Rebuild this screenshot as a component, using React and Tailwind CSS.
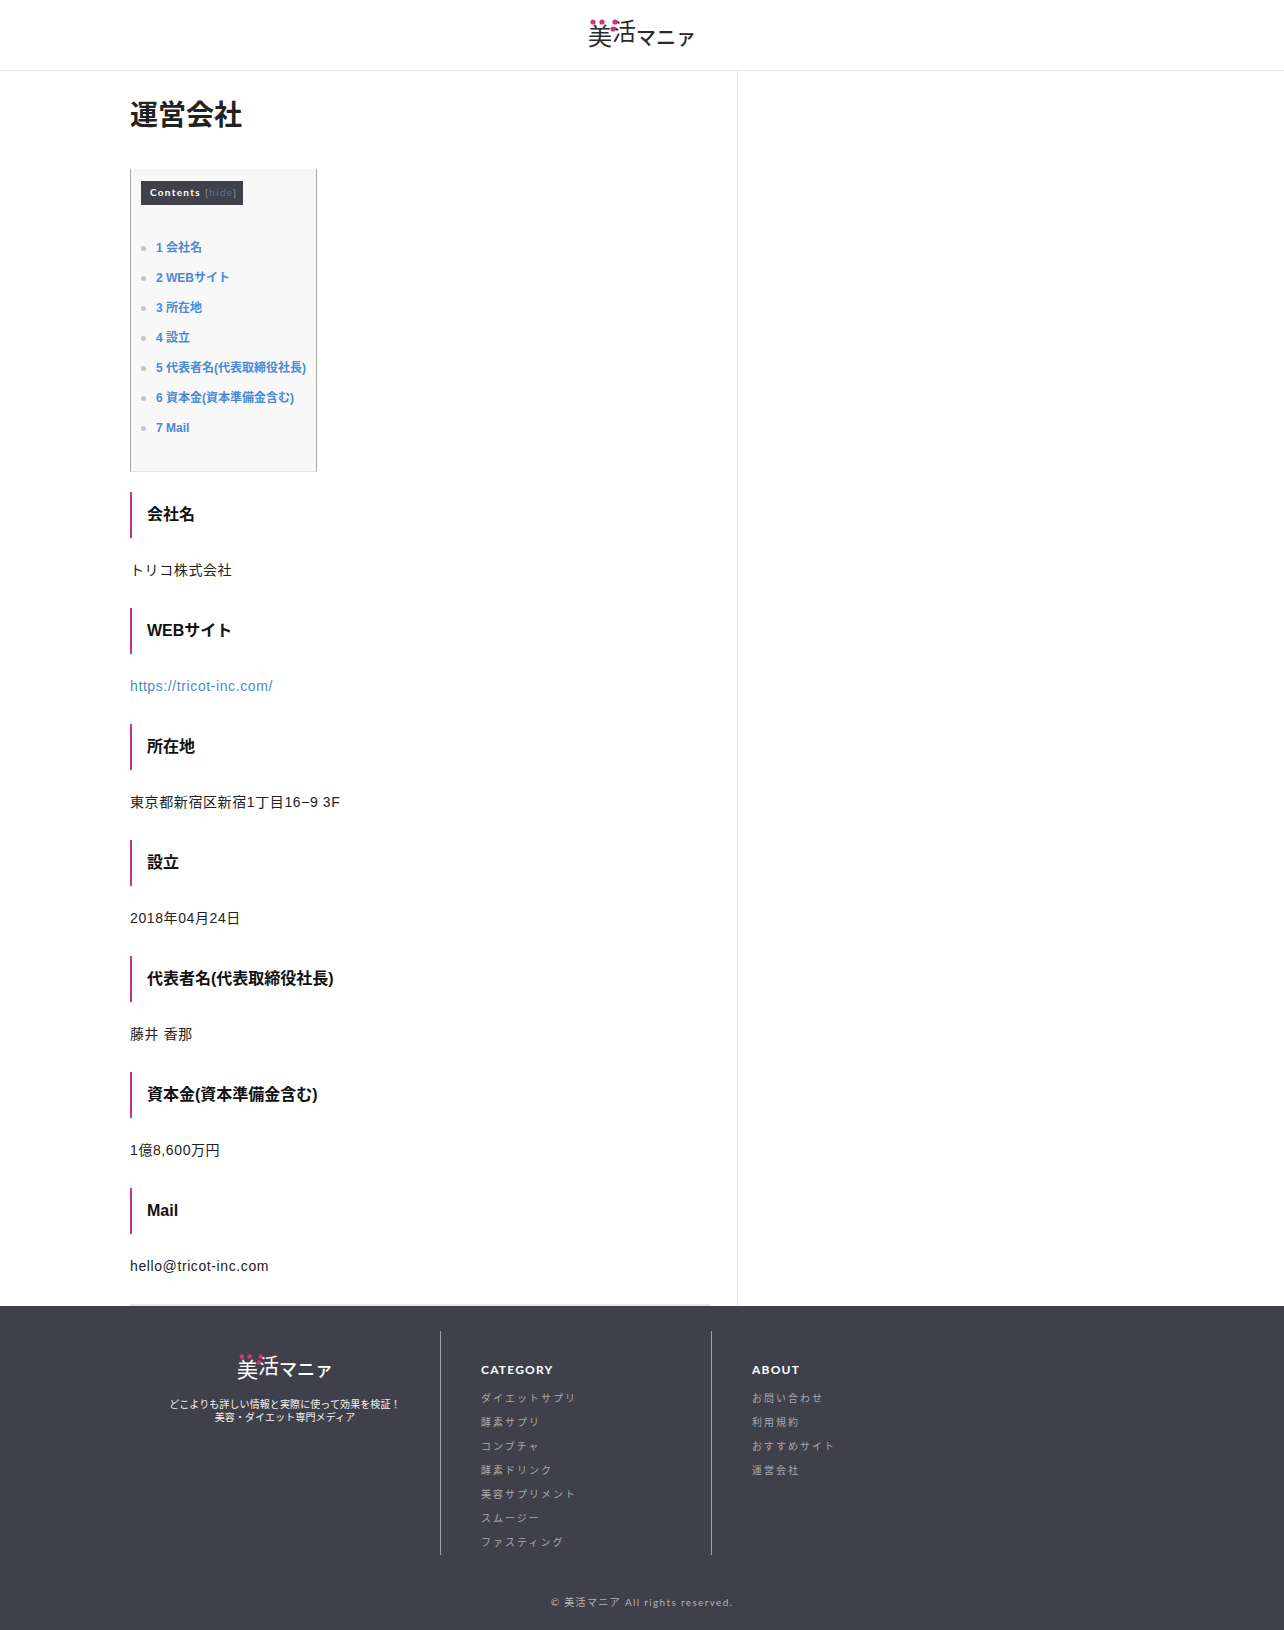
const sans = { fontFamily: '"Liberation Sans", "Noto Sans CJK JP", sans-serif' }

const toc = ['1 会社名', '2 WEBサイト', '3 所在地', '4 設立', '5 代表者名(代表取締役社長)', '6 資本金(資本準備金含む)', '7 Mail']

const sections = [
  { title: '会社名', body: 'トリコ株式会社' },
  { title: 'WEBサイト', body: 'https://tricot-inc.com/', link: true },
  { title: '所在地', body: '東京都新宿区新宿1丁目16−9 3F' },
  { title: '設立', body: '2018年04月24日' },
  { title: '代表者名(代表取締役社長)', body: '藤井 香那' },
  { title: '資本金(資本準備金含む)', body: '1億8,600万円' },
  { title: 'Mail', body: 'hello@tricot-inc.com' },
]

const categories = ['ダイエットサプリ', '酵素サプリ', 'コンブチャ', '酵素ドリンク', '美容サプリメント', 'スムージー', 'ファスティング']
const about = ['お問い合わせ', '利用規約', 'おすすめサイト', '運営会社']

function Dots({ width, height }) {
  return (
    <svg className="absolute left-0 top-0" width={width} height={height} viewBox="0 0 50 14">
      <circle cx="5" cy="3" r="2.6" fill="#d2357d" />
      <circle cx="14" cy="3" r="2.6" fill="#d2357d" />
      <circle cx="27" cy="3" r="2.6" fill="#d2357d" />
      <circle cx="25" cy="10" r="2.6" fill="#d2357d" />
    </svg>
  )
}

function HeaderLogo() {
  return (
    <div className="relative flex items-end h-[32px] text-[#2a2a2e]">
      <span className="text-[24px] leading-[30px] translate-y-[1px]">美</span>
      <span className="text-[24px] leading-[30px] -translate-y-[4px]">活</span>
      <span className="text-[20px] leading-[24px] font-medium -translate-y-[1px]">マニァ</span>
      <Dots width={50} height={14} />
    </div>
  )
}

function FooterLogo() {
  return (
    <div className="relative flex items-end h-[28px] text-white">
      <span className="text-[21px] leading-[26px] translate-y-[1px]">美</span>
      <span className="text-[21px] leading-[26px] -translate-y-[3px]">活</span>
      <span className="text-[18px] leading-[22px] font-medium -translate-y-[1px]">マニァ</span>
      <Dots width={44} height={12} />
    </div>
  )
}

function FooterList({ title, items }) {
  return (
    <div>
      <p className="text-[12px] leading-[16px] font-bold tracking-[1.2px] text-white" style={{ fontFamily: 'Lato, sans-serif' }}>{title}</p>
      <ul className="mt-[9px]">
        {items.map((item) => (
          <li key={item} className="h-[24px] leading-[24px] text-[10px] tracking-[2px] text-[#a9a9ae]">{item}</li>
        ))}
      </ul>
    </div>
  )
}

export default function App() {
  return (
    <div className="min-h-[1630px] bg-white flex flex-col" style={sans}>
      {/* Header */}
      <header className="h-[71px] border-b border-[#e6e6e6] flex items-center justify-center">
        <HeaderLogo />
      </header>

      {/* Main */}
      <div className="flex h-[1235px]">
        <main className="w-[738px] shrink-0 border-r border-[#e4e4e4] pl-[130px] pr-[27px] flex flex-col">
          <h1 className="mt-[26px] text-[28px] leading-[38px] font-bold text-[#222222]">運営会社</h1>

          {/* TOC */}
          <div className="mt-[34px] w-[187px] h-[303px] bg-[#f8f8f8] border-x border-b border-x-[#a8a8a8] border-b-[#e4e4e4] pl-[10px] pt-[12px]">
            <div className="flex items-center h-[24px] w-[102px] pl-[9px] pb-[2px] bg-[#41414b] text-[10px] tracking-[1.3px]" style={{ fontFamily: 'Lato, sans-serif' }}>
              <span className="font-bold text-white">Contents</span>
              <span className="ml-[4px] text-[#9a9aa4]">[<span className="text-[#4d78b8]">hide</span>]</span>
            </div>
            <ul className="mt-[28px]">
              {toc.map((t) => (
                <li key={t} className="h-[30px] flex items-center text-[12px] font-bold text-[#4a8ad4]">
                  <span className="w-[5px] h-[5px] rounded-full bg-[#c4c4c4] mr-[10px]" />
                  {t}
                </li>
              ))}
            </ul>
          </div>

          {/* Sections */}
          <div className="mt-[20px] flex flex-col">
            {sections.map((s) => (
              <section key={s.title} className="h-[116px]">
                <h2 className="h-[46px] border-l-2 border-[#c9337c] pl-[15px] flex items-center text-[16px] font-bold text-[#111111]">{s.title}</h2>
                <p className={`mt-[21px] text-[14px] leading-[22px] tracking-[0.6px] ${s.link ? 'text-[#4a8ad4]' : 'text-[#222222]'}`}>{s.body}</p>
              </section>
            ))}
          </div>
          <div className="mt-auto border-b-2 border-[#e8e8ec]" />
        </main>
      </div>

      {/* Footer */}
      <footer className="flex-1 bg-[#40404a] pt-[25px]">
        <div className="flex h-[224px] pl-[130px]">
          <div className="w-[311px] border-r border-[#a0a0a6] flex flex-col items-center pt-[23px]">
            <FooterLogo />
            <p className="mt-[16px] text-[10px] leading-[13px] tracking-[0.1px] text-center text-[#f2f2f2]">
              どこよりも詳しい情報と実際に使って効果を検証！<br />美容・ダイエット専門メディア
            </p>
          </div>
          <div className="w-[271px] border-r border-[#a0a0a6] pl-[40px] pt-[31px]">
            <FooterList title="CATEGORY" items={categories} />
          </div>
          <div className="pl-[40px] pt-[31px]">
            <FooterList title="ABOUT" items={about} />
          </div>
        </div>
        <p className="mt-[40px] text-center text-[10px] leading-[14px] tracking-[1.35px] text-[#b4b4b8]" style={{ fontFamily: 'Lato, "Noto Sans CJK JP", sans-serif' }}>© 美活マニア All rights reserved.</p>
      </footer>
    </div>
  )
}
